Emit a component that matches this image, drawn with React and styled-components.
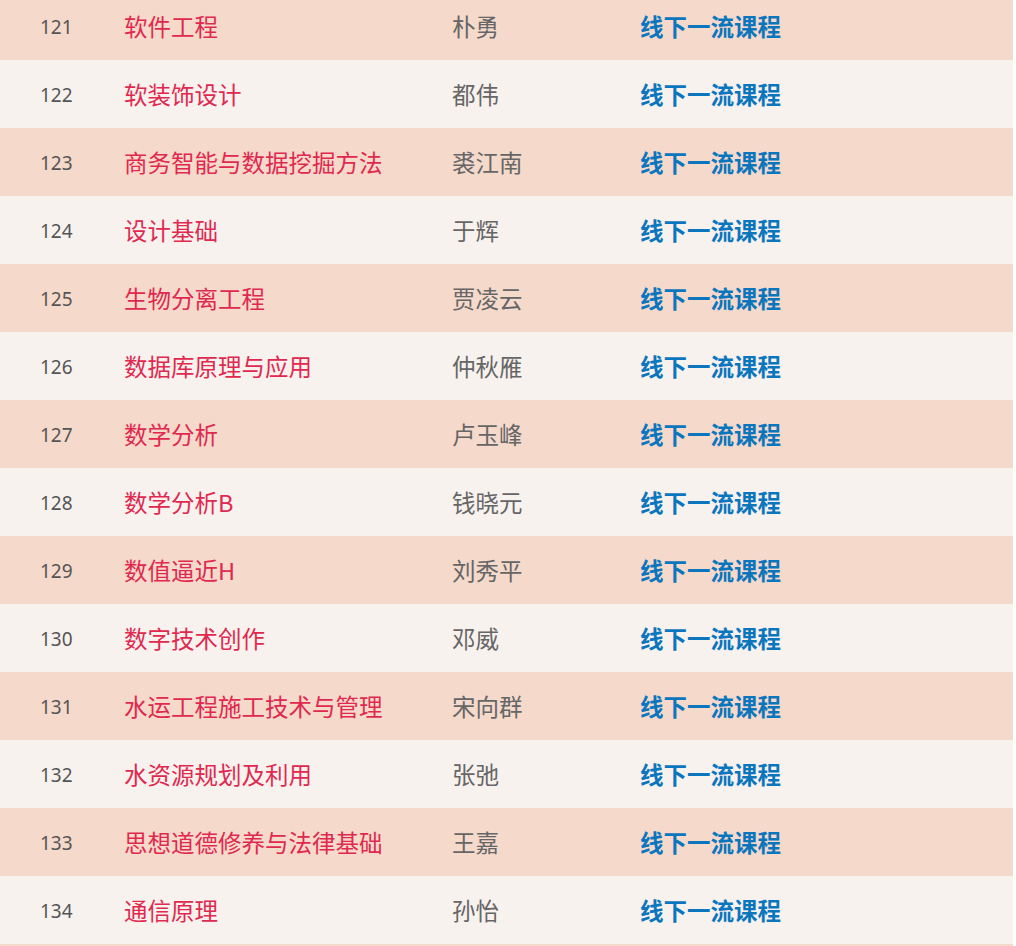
import React from "react";
import styled, { createGlobalStyle } from "styled-components";

const Global = createGlobalStyle`
  html, body { margin: 0; padding: 0; background: #ffffff; }
  body { font-family: "Noto Sans CJK SC", "Noto Sans", sans-serif; overflow: hidden; }
`;

const Table = styled.div`
  width: 1013px;
  margin-top: -8px;
  display: flex;
  flex-direction: column;
`;

const Row = styled.div`
  display: grid;
  grid-template-columns: 124px 328px 188px 1fr;
  align-items: center;
  height: 68px;
  background: ${(p) => (p.$odd ? "#f5d9cb" : "#f8f2ef")};
`;

const Num = styled.span`
  padding-left: 40px;
  padding-top: 2px;
  font-family: "Noto Sans", "Open Sans", sans-serif;
  font-size: 19px;
  color: #555555;
`;

const Name = styled.span`
  font-size: 23.5px;
  color: #e0294f;
  white-space: nowrap;
`;

const Teacher = styled.span`
  font-size: 23.5px;
  color: #666666;
`;

const Tag = styled.span`
  font-size: 23.5px;
  font-weight: 700;
  color: #0b76bd;
`;

const rows = [
  [121, "软件工程", "朴勇"],
  [122, "软装饰设计", "都伟"],
  [123, "商务智能与数据挖掘方法", "裘江南"],
  [124, "设计基础", "于辉"],
  [125, "生物分离工程", "贾凌云"],
  [126, "数据库原理与应用", "仲秋雁"],
  [127, "数学分析", "卢玉峰"],
  [128, "数学分析B", "钱晓元"],
  [129, "数值逼近H", "刘秀平"],
  [130, "数字技术创作", "邓威"],
  [131, "水运工程施工技术与管理", "宋向群"],
  [132, "水资源规划及利用", "张弛"],
  [133, "思想道德修养与法律基础", "王嘉"],
  [134, "通信原理", "孙怡"],
  [135, "", ""],
];

export default function App() {
  return (
    <>
      <Global />
      <Table>
        {rows.map(([n, name, t]) => (
          <Row key={n} $odd={n % 2 === 1}>
            <Num>{name ? n : ""}</Num>
            <Name>{name}</Name>
            <Teacher>{t}</Teacher>
            <Tag>{name ? "线下一流课程" : ""}</Tag>
          </Row>
        ))}
      </Table>
    </>
  );
}
